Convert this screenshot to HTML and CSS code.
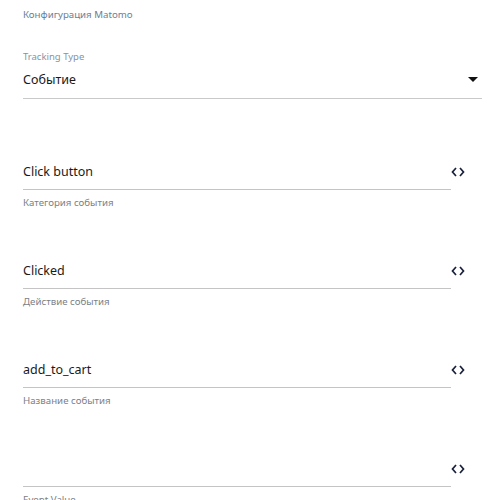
FILE: index.html
```html
<!DOCTYPE html>
<html>
<head>
<meta charset="utf-8">
<link rel="stylesheet" href="styles.css">
</head>
<body>
<div class="page">
  <div class="title">Конфигурация Matomo</div>
  <div class="select">
    <div class="select-label">Tracking Type</div>
    <div class="select-box">
      <span class="select-value">Событие</span>
      <svg class="caret" width="10" height="6" viewBox="0 0 10 6"><polygon points="0,0 10,0 5,5" fill="#111"/></svg>
    </div>
  </div>

  <div class="field">
    <div class="field-row">
      <div class="input">Click button</div>
      <svg class="code" width="14" height="10" viewBox="0 0 14 10"><polyline points="5,1 1.5,5 5,9" fill="none" stroke="#18203a" stroke-width="1.7"/><polyline points="9,1 12.5,5 9,9" fill="none" stroke="#18203a" stroke-width="1.7"/></svg>
    </div>
    <div class="helper">Категория события</div>
  </div>

  <div class="field">
    <div class="field-row">
      <div class="input">Clicked</div>
      <svg class="code" width="14" height="10" viewBox="0 0 14 10"><polyline points="5,1 1.5,5 5,9" fill="none" stroke="#18203a" stroke-width="1.7"/><polyline points="9,1 12.5,5 9,9" fill="none" stroke="#18203a" stroke-width="1.7"/></svg>
    </div>
    <div class="helper">Действие события</div>
  </div>

  <div class="field">
    <div class="field-row">
      <div class="input">add_to_cart</div>
      <svg class="code" width="14" height="10" viewBox="0 0 14 10"><polyline points="5,1 1.5,5 5,9" fill="none" stroke="#18203a" stroke-width="1.7"/><polyline points="9,1 12.5,5 9,9" fill="none" stroke="#18203a" stroke-width="1.7"/></svg>
    </div>
    <div class="helper">Название события</div>
  </div>

  <div class="field">
    <div class="field-row">
      <div class="input"></div>
      <svg class="code" width="14" height="10" viewBox="0 0 14 10"><polyline points="5,1 1.5,5 5,9" fill="none" stroke="#18203a" stroke-width="1.7"/><polyline points="9,1 12.5,5 9,9" fill="none" stroke="#18203a" stroke-width="1.7"/></svg>
    </div>
    <div class="helper">Event Value</div>
  </div>
</div>
</body>
</html>
```

FILE: styles.css
```css
html, body {
  margin: 0;
  padding: 0;
  background: #fff;
}
body {
  font-family: "Noto Sans", "Open Sans", sans-serif;
  overflow: hidden;
}
.page {
  padding: 8px 14px 0 23px;
}
.title {
  font-size: 9.7px;
  line-height: 14px;
  color: #6f7d93;
}
.select {
  margin-top: 29px;
}
.select-label {
  font-size: 9.5px;
  line-height: 12px;
  color: #8792a4;
}
.select-box {
  margin-top: 7px;
  display: flex;
  align-items: center;
  justify-content: space-between;
  padding-bottom: 8px;
  border-bottom: 1px solid #c9c9c9;
}
.select-value {
  font-size: 12.5px;
  line-height: 20px;
  color: #1a1a1a;
}
.caret {
  margin-right: 4px;
}
.field {
  margin-top: 57px;
}
.field + .field {
  margin-top: 45px;
}
.field-row {
  display: flex;
  align-items: center;
}
.input {
  width: 428px;
  font-size: 12.5px;
  line-height: 20px;
  height: 20px;
  color: #1a1a1a;
  padding: 6px 0 7px;
  border-bottom: 1px solid #c4c4c4;
}
.code {
  margin-left: 0;
  margin-top: -3px;
}
.helper {
  margin-top: 6px;
  font-size: 9.7px;
  line-height: 14px;
  color: #7b7f87;
}
```
